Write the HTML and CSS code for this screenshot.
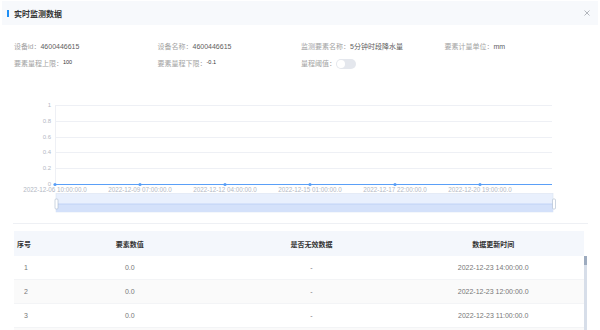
FILE: index.html
```html
<!DOCTYPE html>
<html>
<head lang="zh">
    <meta charset="UTF-8">
    <title>实时监测数据</title>
    <link rel="stylesheet" href="styles.css">
</head>
<body>
<div class="dialog">
    <div class="head">
        <span class="mark"></span>
        <h3 class="title">实时监测数据</h3>
        <svg class="close" width="6" height="6" viewBox="0 0 6 6">
            <path d="M0.5 0.5L5.5 5.5M5.5 0.5L0.5 5.5" stroke="#a0a4ab" stroke-width="0.8" fill="none"/>
        </svg>
    </div>

    <div class="info">
        <div class="item"><span class="label">设备id：</span><span class="val">4600446615</span></div>
        <div class="item"><span class="label">设备名称：</span><span class="val">4600446615</span></div>
        <div class="item"><span class="label">监测要素名称：</span><span class="val">5分钟时段降水量</span></div>
        <div class="item"><span class="label">要素计量单位：</span><span class="val">mm</span></div>
        <div class="item"><span class="label">要素量程上限：</span><span class="val small">100</span></div>
        <div class="item"><span class="label">要素量程下限：</span><span class="val small">-0.1</span></div>
        <div class="item"><span class="label">量程阈值：</span><span class="switch"></span></div>
    </div>

    <!-- 折线图 + 缩放条 -->
    <svg class="chart" width="600" height="151" viewBox="0 72 600 151">
        <g stroke="#eef0f5" stroke-width="1">
            <line x1="55" y1="105.5" x2="552" y2="105.5"/>
            <line x1="55" y1="121.5" x2="552" y2="121.5"/>
            <line x1="55" y1="137.5" x2="552" y2="137.5"/>
            <line x1="55" y1="152.5" x2="552" y2="152.5"/>
            <line x1="55" y1="168.5" x2="552" y2="168.5"/>
            <line x1="55.5" y1="105" x2="55.5" y2="184"/>
        </g>
        <g class="ylab" text-anchor="end">
            <text x="51" y="107">1</text>
            <text x="51" y="123">0.8</text>
            <text x="51" y="139">0.6</text>
            <text x="51" y="154">0.4</text>
            <text x="51" y="170">0.2</text>
            <text x="51" y="186">0</text>
        </g>
        <line x1="55" y1="184.5" x2="552" y2="184.5" stroke="#5a9ff7" stroke-width="1.2"/>
        <g fill="#5a9ff7">
            <circle cx="55" cy="184.5" r="1.6"/>
            <circle cx="140" cy="184.5" r="1.6"/>
            <circle cx="225" cy="184.5" r="1.6"/>
            <circle cx="310" cy="184.5" r="1.6"/>
            <circle cx="395" cy="184.5" r="1.6"/>
            <circle cx="480" cy="184.5" r="1.6"/>
        </g>
        <g class="xlab" text-anchor="middle">
            <text x="55" y="192">2022-12-06 10:00:00.0</text>
            <text x="140" y="192">2022-12-09 07:00:00.0</text>
            <text x="225" y="192">2022-12-12 04:00:00.0</text>
            <text x="310" y="192">2022-12-15 01:00:00.0</text>
            <text x="395" y="192">2022-12-17 22:00:00.0</text>
            <text x="480" y="192">2022-12-20 19:00:00.0</text>
        </g>
        <rect x="56" y="193.5" width="497" height="18.5" fill="#e9f0fd" stroke="#dbe3f0" stroke-width="0.6"/>
        <rect x="56" y="204" width="497" height="8" fill="#d4e1fa"/>
        <line x1="56" y1="204" x2="553" y2="204" stroke="#b9cdf4" stroke-width="0.8"/>
        <rect x="55" y="199" width="3" height="10" rx="1" fill="#fff" stroke="#aab8cc" stroke-width="0.6"/>
        <rect x="552.5" y="199" width="3" height="10" rx="1" fill="#fff" stroke="#aab8cc" stroke-width="0.6"/>
    </svg>

    <div class="sep"></div>

    <div class="table">
        <div class="tr th">
            <div class="td first">序号</div>
            <div class="td">要素数值</div>
            <div class="td">是否无效数据</div>
            <div class="td">数据更新时间</div>
        </div>
        <div class="tbody">
            <div class="rows">
                <div class="tr">
                    <div class="td num">1</div>
                    <div class="td">0.0</div>
                    <div class="td">-</div>
                    <div class="td">2022-12-23 14:00:00.0</div>
                </div>
                <div class="tr stripe">
                    <div class="td num">2</div>
                    <div class="td">0.0</div>
                    <div class="td">-</div>
                    <div class="td">2022-12-23 12:00:00.0</div>
                </div>
                <div class="tr">
                    <div class="td num">3</div>
                    <div class="td">0.0</div>
                    <div class="td">-</div>
                    <div class="td">2022-12-23 11:00:00.0</div>
                </div>
                <div class="tr stripe"></div>
            </div>
            <div class="bar"><span class="thumb"></span></div>
        </div>
    </div>
</div>
</body>
</html>
```

FILE: styles.css
```css
*{margin:0;padding:0;box-sizing:border-box;}
html,body{height:330px;overflow:hidden;background:#fff;}
body{font-family:"Liberation Sans","Noto Sans CJK SC",sans-serif;font-size:7px;color:#777;}

.head{display:flex;align-items:center;height:24px;margin:1px 2px 0;padding:0 8px 0 5px;background:#f7f9fc;}
.mark{display:block;width:2px;height:7px;background:#1f8ff5;margin-right:5px;}
.title{flex:1;font-size:8px;font-weight:bold;color:#333;}
.close{display:block;}

.info{display:grid;grid-template-columns:repeat(4,143.5px);padding:13px 0 0 14px;}
.item{height:17px;line-height:17px;white-space:nowrap;display:flex;align-items:center;}
.label{color:#a3a3a3;}
.val{color:#606060;}
.val.small{font-size:5.5px;color:#333;margin-top:-2px;}
.switch{display:block;width:20px;height:10px;border-radius:5px;background:#e4e7ed;position:relative;}
.switch:before{content:"";position:absolute;left:1px;top:1px;width:8px;height:8px;border-radius:50%;background:#fff;}

.chart{display:block;}
.ylab text{font-size:6px;fill:#b3b8c4;}
.xlab text{font-size:6.3px;fill:#b3b8c4;}

.sep{margin:0 12px 0 13px;border-top:1px solid #eef0f4;}

.table{margin:7px 16px 0 14px;}
.tr{display:grid;grid-template-columns:25px repeat(3,1fr);height:24px;border-bottom:1px solid #f3f4f6;}
.td{display:flex;align-items:center;justify-content:center;white-space:nowrap;}
.th{height:25px;background:#f4f7fc;border-bottom:none;color:#333;font-weight:bold;}
.th .first{justify-content:flex-start;padding-left:3px;}
.num{justify-content:flex-start;padding-left:10px;}
.stripe{background:#fafafa;}
.tbody{display:flex;margin-right:-3px;}
.rows{flex:1;}
.bar{width:3px;background:#d7dee9;}
.thumb{display:block;height:9px;background:#9dabbf;}
```
